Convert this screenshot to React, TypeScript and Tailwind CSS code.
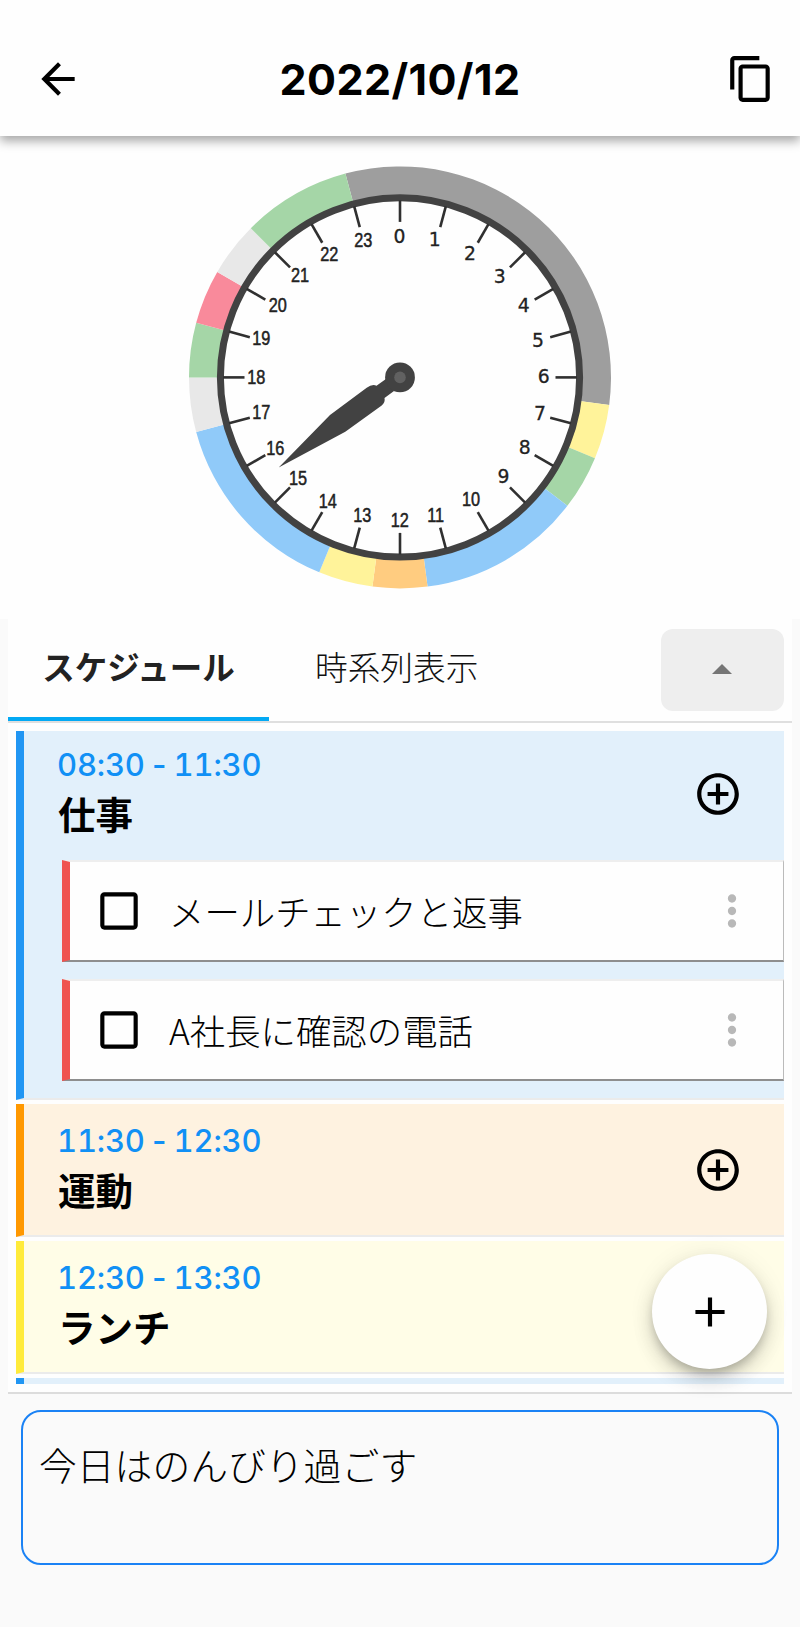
import {
  MdAdd,
  MdAddCircleOutline,
  MdArrowBack,
  MdCheckBoxOutlineBlank,
  MdContentCopy,
  MdMoreVert,
} from "react-icons/md";

// start / end are hours on the 24h dial
const segments = [
  { start: 23, end: 30.5, color: "#9e9e9e" },
  { start: 6.5, end: 7.5, color: "#fff39a" },
  { start: 7.5, end: 8.5, color: "#a5d6a7" },
  { start: 8.5, end: 11.5, color: "#90caf9" },
  { start: 11.5, end: 12.5, color: "#ffcc80" },
  { start: 12.5, end: 13.5, color: "#fff39a" },
  { start: 13.5, end: 17, color: "#90caf9" },
  { start: 17, end: 18, color: "#e8e8e8" },
  { start: 18, end: 19, color: "#a5d6a7" },
  { start: 19, end: 20, color: "#f98a9b" },
  { start: 20, end: 21, color: "#e8e8e8" },
  { start: 21, end: 23, color: "#a5d6a7" },
];

// label centres, relative to the middle of the dial
const labels = [
  [-0.5, -140.5],
  [34.8, -137.5],
  [70, -124],
  [99.8, -101],
  [123.7, -71.7],
  [138, -36.7],
  [143.7, -0.3],
  [140, 36.7],
  [124.7, 70.7],
  [103.5, 99.5],
  [71, 122.7],
  [35.7, 138.3],
  [-0.3, 143],
  [-37.7, 138.7],
  [-72.3, 124.7],
  [-102, 101.7],
  [-124.7, 71.3],
  [-138.7, 35.3],
  [-143.7, 0],
  [-138.7, -38.7],
  [-122.3, -71.3],
  [-100, -101.3],
  [-70.7, -122.7],
  [-36.7, -136.3],
];

const point = (hour: number, r: number) => {
  const a = (hour / 24) * Math.PI * 2;
  return `${(Math.sin(a) * r).toFixed(2)} ${(-Math.cos(a) * r).toFixed(2)}`;
};

const slice = (start: number, end: number) =>
  `M${point(start, 211)} A211 211 0 0 1 ${point(end, 211)} L${point(end, 181)} A181 181 0 0 0 ${point(start, 181)}Z`;

const Clock = () => (
  <svg className="h-[430px] w-[430px]" viewBox="-215 -215.4 430 430">
    {segments.map((s) => (
      <path key={s.start} d={slice(s.start, s.end)} fill={s.color} />
    ))}
    <circle r="179.6" fill="#fefefe" stroke="#424242" strokeWidth="7" />
    {labels.map(([x, y], hour) => (
      <g key={hour}>
        <line
          y1="-177"
          y2="-155.5"
          stroke="#303030"
          strokeWidth="2.6"
          transform={`rotate(${hour * 15})`}
        />
        {hour < 10 ? (
          <text
            x={x}
            y={y + 6.3}
            textAnchor="middle"
            className="fill-[#222] stroke-[#222] stroke-[0.3px] font-['DejaVu_Sans',sans-serif] text-[18.8px]"
          >
            {hour}
          </text>
        ) : (
          <text
            transform={`translate(${x} ${y + 6.2}) scale(0.84 1)`}
            textAnchor="middle"
            className="fill-[#222] stroke-[#222] stroke-[0.5px] font-['Liberation_Sans',sans-serif] text-[19.4px]"
          >
            {hour}
          </text>
        )}
      </g>
    ))}
    <path
      d="M-6 13.5 L-15.5 20.5 Q-14.5 24.5 -18.3 28 L-54.7 54.3 L-121.3 90 L-70 37.5 L-33.3 10.3 Q-28 6.5 -23.5 8.3 L-12 0Z"
      fill="#424242"
    />
    <circle r="14.9" fill="#424242" />
    <circle r="5.8" fill="#616161" />
  </svg>
);

const plans = [
  {
    time: "08:30 - 11:30",
    title: "仕事",
    style: "h-[369px] pt-[15px] border-l-[#2196f3] bg-[#e2f0fb]",
    tasks: ["メールチェックと返事", "A社長に確認の電話"],
  },
  {
    time: "11:30 - 12:30",
    title: "運動",
    style: "h-[133px] pt-[18px] border-l-[#ff9800] bg-[#fef2e0]",
    tasks: [],
  },
  {
    time: "12:30 - 13:30",
    title: "ランチ",
    style: "h-[133px] pt-[18px] border-l-[#ffeb3b] bg-[#fffde7]",
    tasks: [],
  },
];

const App = () => {
  return (
    <div className="flex h-[1627px] w-[800px] flex-col overflow-hidden bg-[#fafafa] font-['Noto_Sans_CJK_JP',sans-serif] text-black">
      <header className="relative z-10 flex h-[136px] shrink-0 items-center justify-between bg-[#fefefe] pt-[21px] pr-6 pl-[33px] shadow-[0_5px_10px_rgba(0,0,0,0.35)]">
        <MdArrowBack className="size-[50px]" />
        <h1 className="mt-[2px] mr-[9px] font-['Inter',sans-serif] text-[43px] leading-none font-bold tracking-[0.4px]">
          2022/10/12
        </h1>
        <MdContentCopy className="size-[50px]" />
      </header>

      <section className="flex h-[483px] shrink-0 justify-center bg-[#fefefe] pt-[26px]">
        <Clock />
      </section>

      <main className="relative mx-2 h-[775px] shrink-0 border-b-2 border-[#dcdcdc] bg-[#fefefe]">
        <div className="flex h-[104px] items-start border-b-2 border-[#dfdfdf]">
          <div className="flex h-[102px] w-[261px] justify-center border-b-4 border-[#03a9f4] pt-[23px] text-[32.5px] leading-[48px] font-bold text-[#222]">
            スケジュール
          </div>
          <div className="ml-[46px] pt-[23px] text-[32.7px] leading-[48px] font-light text-[#111]">
            時系列表示
          </div>
          <button className="mt-[10px] mr-2 ml-auto flex h-[82px] w-[123px] items-center justify-center rounded-xl bg-[#eee] pr-px pb-[2px]">
            <svg className="h-[10px] w-5" viewBox="0 0 20 10">
              <path d="M0 10 10 0 20 10Z" fill="#757575" />
            </svg>
          </button>
        </div>

        <div className="mt-[8px] flex h-[653px] flex-col gap-1 overflow-hidden px-2">
          {plans.map((plan) => (
            <section
              key={plan.time}
              className={`shrink-0 border-b-2 border-l-8 border-b-[#ebebeb] ${plan.style}`}
            >
              <div className="flex justify-between pr-[41px] pl-[34px]">
                <div>
                  <p className="-ml-px font-['Inter',sans-serif] text-[31px] leading-[38px] font-medium tracking-[-0.2px] text-[#1190f5] tabular-nums [word-spacing:-3.6px]">
                    {plan.time}
                  </p>
                  <h2 className="-mt-px text-[37.5px] leading-[60px] font-bold">
                    {plan.title}
                  </h2>
                </div>
                <MdAddCircleOutline className="mt-[23px] size-[50px]" />
              </div>
              {plan.tasks.length > 0 && (
                <div className="mt-[17px] ml-[38px] flex flex-col gap-[17px]">
                  {plan.tasks.map((task) => (
                    <div
                      key={task}
                      className="flex h-[102px] items-center border-t-2 border-r-[1px] border-b-2 border-l-8 border-t-[#eee] border-r-[#bbb] border-b-[#8e8e8e] border-l-[#ef5350] bg-[#fefefe] pr-[26px] pl-[24px]"
                    >
                      <MdCheckBoxOutlineBlank className="size-[50px]" />
                      <span className="ml-[25px] text-[35.4px] leading-none font-light">
                        {task}
                      </span>
                      <MdMoreVert className="ml-auto size-[50px] text-[#b8b8b8]" />
                    </div>
                  ))}
                </div>
              )}
            </section>
          ))}
          <div className="h-[6px] shrink-0 border-l-8 border-[#2196f3] bg-[#e2f0fb]" />
        </div>

        <button className="absolute right-[25px] bottom-[23px] flex size-[115px] items-center justify-center rounded-full bg-[#fefefe] shadow-[0_6px_10px_-2px_rgba(0,0,0,0.2),0_12px_20px_rgba(0,0,0,0.14),0_2px_26px_rgba(0,0,0,0.08)]">
          <MdAdd className="size-[50px]" />
        </button>
      </main>

      <div className="mx-[21px] mt-4 h-[155px] shrink-0 rounded-[20px] border-2 border-[#1a82f5] px-[16px] pt-[24px] text-[37.8px] leading-[56px] font-light">
        今日はのんびり過ごす
      </div>
    </div>
  );
};

export default App;
